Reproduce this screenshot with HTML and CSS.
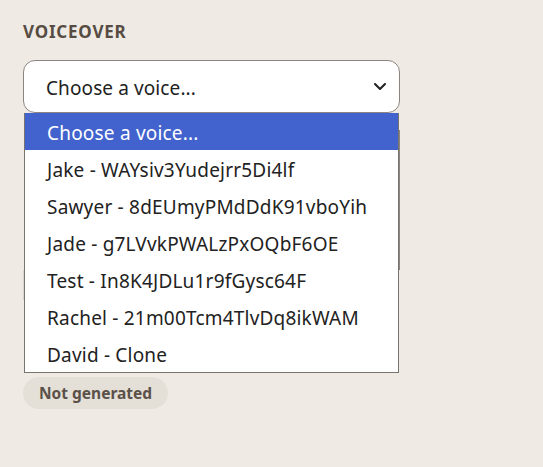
FILE: index.html
```html
<!DOCTYPE html>
<html lang="en">
<head>
<meta charset="utf-8">
<link rel="stylesheet" href="styles.css">
</head>
<body>
<section class="panel">
  <h2 class="label">VOICEOVER</h2>
  <div class="field">
    <div class="select">
      <span class="select-text">Choose a voice...</span>
      <svg class="chevron" width="14" height="9" viewBox="0 0 14 9"><path d="M2 2l5 5 5-5" fill="none" stroke="#222" stroke-width="2.1" stroke-linecap="round" stroke-linejoin="round"/></svg>
    </div>
    <div class="under">
      <div class="under-box"></div>
      <div class="under-line"></div>
    </div>
    <ul class="listbox">
      <li class="option selected">Choose a voice...</li>
      <li class="option">Jake - WAYsiv3Yudejrr5Di4lf</li>
      <li class="option">Sawyer - 8dEUmyPMdDdK91vboYih</li>
      <li class="option">Jade - g7LVvkPWALzPxOQbF6OE</li>
      <li class="option">Test - In8K4JDLu1r9fGysc64F</li>
      <li class="option">Rachel - 21m00Tcm4TlvDq8ikWAM</li>
      <li class="option">David - Clone</li>
    </ul>
  </div>
  <div class="pill">Not generated</div>
</section>
</body>
</html>
```
FILE: styles.css
```css
html, body {
  margin: 0;
  padding: 0;
}
body {
  background: #efebe4;
  font-family: "Noto Sans", "Open Sans", sans-serif;
  width: 543px;
  height: 467px;
  overflow: hidden;
}
.panel {
  padding: 21px 23px 0 23px;
  width: 377px;
}
.label {
  margin: 0 0 17px 0;
  font-size: 17px;
  font-weight: 700;
  letter-spacing: 0.8px;
  color: #564c43;
  line-height: 22px;
}
.field {
  position: relative;
}
.select {
  box-sizing: border-box;
  height: 53px;
  border: 1px solid #8a8580;
  border-radius: 12px;
  background: #fff;
  display: flex;
  align-items: center;
  justify-content: space-between;
  padding: 2px 12px 0 22px;
}
.select-text {
  font-size: 19px;
  letter-spacing: 0.1px;
  color: #222;
}
.chevron {
  display: block;
  margin-top: -2px;
}
.under {
  box-sizing: border-box;
  height: 264px;
  padding-top: 17px;
}
.under-box {
  height: 140px;
  border-right: 2px solid #8c8782;
}
.under-line {
  height: 30px;
  width: 3px;
  background: #d9d4cc;
}
.listbox {
  position: absolute;
  top: 53px;
  left: 1px;
  right: 1px;
  margin: 0;
  padding: 0;
  list-style: none;
  background: #fff;
  border: 1px solid #77736f;
  border-top: none;
}
.option {
  box-sizing: border-box;
  height: 37px;
  line-height: 34px;
  padding: 3px 0 0 22px;
  font-size: 19px;
  letter-spacing: 0.2px;
  color: #222;
  white-space: nowrap;
}
.option.selected {
  background: #4263cd;
  color: #fff;
}
.pill {
  width: fit-content;
  height: 32px;
  line-height: 32px;
  padding: 0 16px;
  border-radius: 16px;
  background: #e4dfd7;
  color: #5b5149;
  font-size: 15.5px;
  font-weight: 700;
}
```
